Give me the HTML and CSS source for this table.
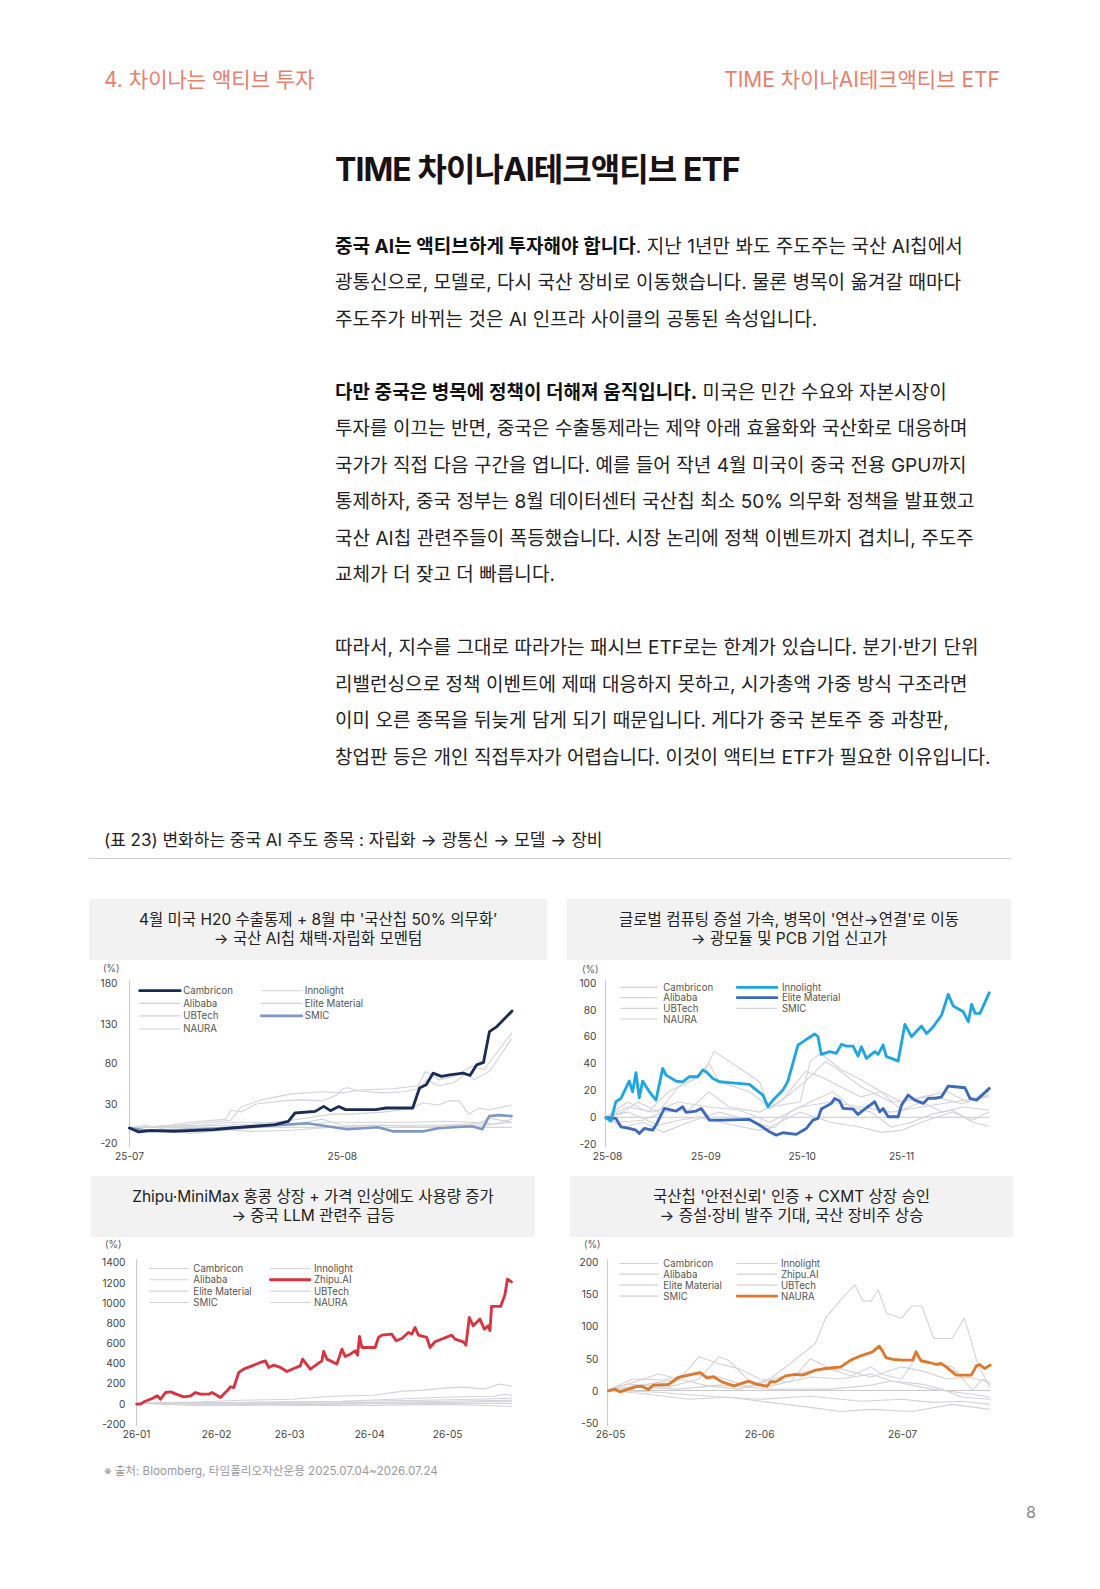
FILE: index.html
```html
<!DOCTYPE html>
<html lang="ko">
<head>
<meta charset="utf-8">
<title>TIME 차이나AI테크액티브 ETF</title>
<link rel="stylesheet" href="styles.css">
</head>
<body>
<div class="page">
  <header class="topbar">
    <span>4. 차이나는 액티브 투자</span>
    <span>TIME 차이나AI테크액티브 ETF</span>
  </header>

  <article class="article">
    <h1 class="title">TIME 차이나AI테크액티브 ETF</h1>
    <p class="para"><b>중국 AI는 액티브하게 투자해야 합니다</b>. 지난 1년만 봐도 주도주는 국산 AI칩에서<br>광통신으로, 모델로, 다시 국산 장비로 이동했습니다. 물론 병목이 옮겨갈 때마다<br>주도주가 바뀌는 것은 AI 인프라 사이클의 공통된 속성입니다.</p>
    <p class="para"><b>다만 중국은 병목에 정책이 더해져 움직입니다.</b> 미국은 민간 수요와 자본시장이<br>투자를 이끄는 반면, 중국은 수출통제라는 제약 아래 효율화와 국산화로 대응하며<br>국가가 직접 다음 구간을 엽니다. 예를 들어 작년 4월 미국이 중국 전용 GPU까지<br>통제하자, 중국 정부는 8월 데이터센터 국산칩 최소 50% 의무화 정책을 발표했고<br>국산 AI칩 관련주들이 폭등했습니다. 시장 논리에 정책 이벤트까지 겹치니, 주도주<br>교체가 더 잦고 더 빠릅니다.</p>
    <p class="para">따라서, 지수를 그대로 따라가는 패시브 ETF로는 한계가 있습니다. 분기·반기 단위<br>리밸런싱으로 정책 이벤트에 제때 대응하지 못하고, 시가총액 가중 방식 구조라면<br>이미 오른 종목을 뒤늦게 담게 되기 때문입니다. 게다가 중국 본토주 중 과창판,<br>창업판 등은 개인 직접투자가 어렵습니다. 이것이 액티브 ETF가 필요한 이유입니다.</p>
  </article>

  <section class="figure">
    <div class="caption">(표 23) 변화하는 중국 AI 주도 종목 : 자립화 → 광통신 → 모델 → 장비</div>

    <div class="grid">
      <!-- Chart 1 -->
      <div class="cell">
        <div class="chead">4월 미국 H20 수출통제 + 8월 中 '국산칩 50% 의무화’<br>→ 국산 AI칩 채택·자립화 모멘텀</div>
        <svg class="chart" width="458" height="216" viewBox="0 0 452 213">
          <text class="unit" x="22" y="8">(%)</text>
          <text class="yl" x="28" y="23">180</text>
          <text class="yl" x="28" y="63">130</text>
          <text class="yl" x="28" y="102">80</text>
          <text class="yl" x="28" y="142">30</text>
          <text class="yl" x="28" y="181">-20</text>
          <line class="axis" x1="40" y1="20" x2="40" y2="184"/>
          <line class="zero" x1="40" y1="165" x2="417" y2="165"/>
          <text class="xl" x="40" y="193">25-07</text>
          <text class="xl" x="250" y="193">25-08</text>

          <polyline class="s-gray" points="40,166 100,162 140,158 150,145 170,138 200,132 230,130 250,131 270,128 300,127 325,124 332,110 345,118 360,115 378,105 390,108 417,72"/>
          <polyline class="s-gray" points="40,166 80,163 100,160 135,157 140,148 150,150 165,142 190,139 210,138 230,139 245,133 250,127 255,126 265,129 290,131 310,130 326,127 333,118 345,124 360,121 372,112 380,118 395,110 417,78"/>
          <polyline class="s-gray" points="40,166 100,164 160,162 200,158 240,152 260,152 290,150 315,147 330,141 345,143 355,139 365,139 375,152 385,146 395,148 417,143"/>
          <polyline class="s-gray" points="40,166 70,164 110,163 140,160 180,160 200,163 240,160 280,160 320,160 350,159 380,160 400,162 417,157"/>
          <polyline class="s-gray" points="40,166 60,165 90,166 130,167 160,169 200,168 240,165 280,163 320,163 350,163 385,161 395,156 417,160"/>
          <polyline class="s-gray" points="40,166 55,163 75,167 100,171 120,169 160,166 210,161 230,157 250,163 290,163 330,165 360,163 390,163 417,160"/>
          <polyline class="s-smic" points="40,166 55,168 90,168 130,166 170,164 200,162 215,161 235,164 255,167 285,165 300,169 330,169 345,166 360,165 378,164 388,167 395,154 405,153 417,154"/>
          <polyline class="s-cam" points="40,165.7 49,169.6 60.6,168.3 83.8,169 100.4,168.3 123.7,167.3 140.3,165.7 163.5,164 183.4,162.4 196.7,159.1 203.3,150.9 223.3,149.3 231.6,144.4 238.2,148.6 246.5,144.4 253.1,147.6 283,147.6 293,146 319.5,146 326.2,126.3 332.8,123 339.5,111.6 347.8,114.8 356,113.2 369.3,111.6 376,113.9 382.6,103.4 389.3,101 395.2,70.6 402.5,65.6 417.5,50.2"/>

          <line class="s-cam" x1="50" y1="30.2" x2="90" y2="30.2"/>
          <text class="lg" x="93" y="30.2">Cambricon</text>
          <line class="s-gray" x1="50" y1="42.7" x2="90" y2="42.7"/>
          <text class="lg" x="93" y="42.7">Alibaba</text>
          <line class="s-gray" x1="50" y1="55.1" x2="90" y2="55.1"/>
          <text class="lg" x="93" y="55.1">UBTech</text>
          <line class="s-gray" x1="50" y1="68" x2="90" y2="68"/>
          <text class="lg" x="93" y="68">NAURA</text>
          <line class="s-gray" x1="170" y1="30.2" x2="210" y2="30.2"/>
          <text class="lg" x="213" y="30.2">Innolight</text>
          <line class="s-gray" x1="170" y1="42.7" x2="210" y2="42.7"/>
          <text class="lg" x="213" y="42.7">Elite Material</text>
          <line class="s-smic" x1="170" y1="55.1" x2="210" y2="55.1"/>
          <text class="lg" x="213" y="55.1">SMIC</text>
        </svg>
      </div>

      <!-- Chart 2 -->
      <div class="cell">
        <div class="chead">글로벌 컴퓨팅 증설 가속, 병목이 '연산→연결'로 이동<br>→ 광모듈 및 PCB 기업 신고가</div>
        <svg class="chart" width="444" height="216" viewBox="0 0 438 213">
          <text class="unit" x="23" y="9">(%)</text>
          <text class="yl" x="29" y="23">100</text>
          <text class="yl" x="29" y="49">80</text>
          <text class="yl" x="29" y="75">60</text>
          <text class="yl" x="29" y="102">40</text>
          <text class="yl" x="29" y="128">20</text>
          <text class="yl" x="29" y="155">0</text>
          <text class="yl" x="29" y="181">-20</text>
          <line class="axis" x1="38" y1="20" x2="38" y2="184"/>
          <line class="zero" x1="38" y1="155" x2="417" y2="155"/>
          <text class="xl" x="40" y="193">25-08</text>
          <text class="xl" x="137" y="193">25-09</text>
          <text class="xl" x="232" y="193">25-10</text>
          <text class="xl" x="330" y="193">25-11</text>

          <polyline class="s-gray" points="38,155 60,140 80,150 100,130 120,120 135,112 145,90 160,100 175,110 190,120 200,147 215,135 235,110 250,115 270,125 290,135 310,130 330,148 350,140 370,150 390,145 416,148"/>
          <polyline class="s-gray" points="38,155 55,150 70,140 90,150 110,125 125,118 140,102 150,120 180,130 200,145 230,140 240,100 250,92 270,108 290,118 310,130 330,140 350,135 375,130 395,140 416,133"/>
          <polyline class="s-gray" points="38,155 50,160 75,158 95,150 120,148 140,130 160,145 190,150 210,140 235,120 255,100 270,110 290,125 320,140 340,138 360,134 390,142 416,130"/>
          <polyline class="s-gray" points="38,155 60,150 90,163 110,158 130,155 160,162 190,168 205,165 220,150 240,140 262,130 280,145 300,150 320,165 340,160 360,152 380,148 400,160 416,164"/>
          <polyline class="s-gray" points="38,155 55,165 75,160 95,170 120,160 150,150 180,158 200,165 230,150 260,160 290,165 310,170 330,168 350,160 380,150 400,158 416,150"/>
          <polyline class="s-gray" points="38,155 60,145 85,150 110,140 140,145 170,148 200,160 230,145 260,140 290,145 320,150 350,145 380,140 416,135"/>
          <polyline class="s-elite" points="38.4,155.6 48.2,156.2 53.2,164.5 61.4,166.1 68,167.8 71.3,171.1 76.2,166.1 84.5,167.8 87.8,162.8 96,146.4 107.5,149 114.1,144.7 117.4,150.3 127.3,149 132.3,146.4 140.5,157.9 153.7,157.9 180,157.2 189.9,162.8 199.8,169.4 206.4,172.7 213,170.4 226.2,172 236.1,166.1 242.6,157.9 247.6,156.2 250.9,147 260.8,141.4 264.1,136.5 269,139.1 272.3,146.4 282.2,147 287.1,152.3 295.4,145.7 303.6,139.8 308.5,149.7 311.8,146.4 316.8,154.6 326.7,154.6 330,143.1 336.6,133.2 343.1,138.2 351.4,141.4 356.3,136.5 362.9,136.5 369.5,134.9 376.1,124.3 382.7,125 392.6,126 397.5,136.5 404.1,138.2 416.6,126.6"/>
          <polyline class="s-inno" points="38.4,155.6 43.3,158.9 48.2,139.8 53.2,136.5 61.4,119.4 64.7,129.9 68,111.2 71.3,135.8 74.6,119.4 81.2,129.9 87.8,138.2 94.4,106.9 97.7,113.5 107.5,119.4 114.1,120.1 120.7,115.1 129,115.1 133.9,108.5 137.2,110.2 143.8,116.8 150.4,120.1 160.3,121 180,122.7 193.2,133.2 198.2,144.7 203.1,138.2 213,128.3 217.9,119.4 227.8,83.9 237.7,77.3 244.3,73 247.6,75.6 250.9,93.1 259.1,90.4 265.7,92.1 270.7,83.2 275.6,84.9 282.2,84.9 287.1,94.7 290.4,85.5 295.4,97 303.6,90.4 306.9,93.1 311.8,83.9 315.1,95.4 320.1,97 326.7,99.7 333.3,63.5 339.8,75.6 349.7,65.1 354.7,72.4 361.3,65.8 369.5,54.3 376.1,33.9 381,45.4 390.9,51 395.9,60.8 399.2,43.7 402.5,52.6 407.4,52.6 416.6,32.2"/>

          <line class="s-gray" x1="53" y1="27" x2="89" y2="27"/>
          <text class="lg" x="95" y="27">Cambricon</text>
          <line class="s-gray" x1="53" y1="37.1" x2="89" y2="37.1"/>
          <text class="lg" x="95" y="37.1">Alibaba</text>
          <line class="s-gray" x1="53" y1="47.7" x2="89" y2="47.7"/>
          <text class="lg" x="95" y="47.7">UBTech</text>
          <line class="s-gray" x1="53" y1="58.2" x2="89" y2="58.2"/>
          <text class="lg" x="95" y="58.2">NAURA</text>
          <line class="s-inno" x1="168" y1="27" x2="207" y2="27"/>
          <text class="lg" x="212" y="27">Innolight</text>
          <line class="s-elite" x1="168" y1="37.1" x2="207" y2="37.1"/>
          <text class="lg" x="212" y="37.1">Elite Material</text>
          <line class="s-gray" x1="168" y1="47.7" x2="207" y2="47.7"/>
          <text class="lg" x="212" y="47.7">SMIC</text>
        </svg>
      </div>

      <!-- Chart 3 -->
      <div class="cell">
        <div class="chead chead-l">Zhipu·MiniMax 홍콩 상장 + 가격 인상에도 사용량 증가<br>→ 중국 LLM 관련주 급등</div>
        <svg class="chart" width="458" height="209" viewBox="0 0 452 206">
          <text class="unit" x="24" y="7.5">(%)</text>
          <text class="yl" x="36" y="25">1400</text>
          <text class="yl" x="36" y="44.9">1200</text>
          <text class="yl" x="36" y="64.8">1000</text>
          <text class="yl" x="36" y="84.6">800</text>
          <text class="yl" x="36" y="104.5">600</text>
          <text class="yl" x="36" y="124.4">400</text>
          <text class="yl" x="36" y="144.3">200</text>
          <text class="yl" x="36" y="164.2">0</text>
          <text class="yl" x="36" y="184">-200</text>
          <line class="axis" x1="47" y1="22" x2="47" y2="186"/>
          <line class="zero" x1="47" y1="164" x2="417" y2="164"/>
          <text class="xl" x="47" y="194.5">26-01</text>
          <text class="xl" x="126" y="194.5">26-02</text>
          <text class="xl" x="198" y="194.5">26-03</text>
          <text class="xl" x="277" y="194.5">26-04</text>
          <text class="xl" x="354" y="194.5">26-05</text>

          <polyline class="s-gray" points="47,164 100,163 150,161 200,160 240,157 280,156 310,152 330,151 350,149 370,148 390,150 405,145 417,147"/>
          <polyline class="s-gray" points="47,164 150,163 250,162 300,160 350,158 400,157 410,155 417,156"/>
          <polyline class="s-gray" points="47,164 120,165 200,163 260,162 330,161 380,160 417,159"/>
          <polyline class="s-gray" points="47,164 100,166 160,166 230,165 300,164 360,163 417,162"/>
          <polyline class="s-gray" points="47,164 130,164 200,166 280,166 350,165 417,167"/>
          <polyline class="s-gray" points="47,164 90,163 150,165 220,164 290,163 350,162 417,161"/>
          <polyline class="s-zhipu" points="47,164.8 50.9,164.8 54.2,162.5 62.4,159.2 67.4,156.6 70.6,159.9 75.6,153.3 80.5,152.7 88.7,155.9 93.6,157.6 100.2,156.6 105.1,153.3 110,155 118.2,155 121.5,153.3 129.7,158.2 136.3,151.7 139.6,147.7 142.9,148.4 147.8,133.6 152.7,130.3 160.9,127 169.1,123.7 174.1,122.1 177.3,128.6 182.3,126.3 188.8,128.6 195.4,132.6 202,129.6 208.5,127 210.8,120.4 218.4,130.3 226.6,124.4 229.9,122.1 231.5,112.8 234.8,120.4 244.6,125.3 249.6,110.5 252.8,117.8 257.8,115.5 262.7,112.2 265,116.5 267,98 269.3,108.9 282.4,108.9 285.7,99 289,96.7 298.8,95.7 303.1,102.3 308.7,100 315.2,94.1 318.5,95.7 321.8,89.2 325.1,96.7 333.3,99 336.6,108.9 341.5,103.3 357.9,96.7 361.2,100.7 369.4,103.3 372,106.6 375.3,79.3 379.2,87.5 385.8,80.9 390.1,90.8 394,87.5 395.7,92.4 397.3,68.4 406.2,68.4 410.4,57.2 413,41.5 417,44.1"/>

          <line class="s-gray" x1="60" y1="30.9" x2="98" y2="30.9"/>
          <text class="lg" x="103" y="30.9">Cambricon</text>
          <line class="s-gray" x1="60" y1="42.1" x2="98" y2="42.1"/>
          <text class="lg" x="103" y="42.1">Alibaba</text>
          <line class="s-gray" x1="60" y1="53.3" x2="98" y2="53.3"/>
          <text class="lg" x="103" y="53.3">Elite Material</text>
          <line class="s-gray" x1="60" y1="64.5" x2="98" y2="64.5"/>
          <text class="lg" x="103" y="64.5">SMIC</text>
          <line class="s-gray" x1="179" y1="30.9" x2="218" y2="30.9"/>
          <text class="lg" x="222" y="30.9">Innolight</text>
          <line class="s-zhipu" x1="179" y1="42.1" x2="218" y2="42.1"/>
          <text class="lg" x="222" y="42.1">Zhipu.AI</text>
          <line class="s-gray" x1="179" y1="53.3" x2="218" y2="53.3"/>
          <text class="lg" x="222" y="53.3">UBTech</text>
          <line class="s-gray" x1="179" y1="64.5" x2="218" y2="64.5"/>
          <text class="lg" x="222" y="64.5">NAURA</text>
        </svg>
      </div>

      <!-- Chart 4 -->
      <div class="cell">
        <div class="chead chead-r">국산칩 '안전신뢰' 인증 + CXMT 상장 승인<br>→ 증설·장비 발주 기대, 국산 장비주 상승</div>
        <svg class="chart" width="444" height="209" viewBox="0 0 438 206">
          <text class="unit" x="25" y="7.5">(%)</text>
          <text class="yl" x="31" y="25">200</text>
          <text class="yl" x="31" y="56.6">150</text>
          <text class="yl" x="31" y="88.2">100</text>
          <text class="yl" x="31" y="119.8">50</text>
          <text class="yl" x="31" y="151.4">0</text>
          <text class="yl" x="31" y="183">-50</text>
          <line class="axis" x1="40" y1="22" x2="40" y2="186"/>
          <line class="zero" x1="40" y1="151.4" x2="417" y2="151.4"/>
          <text class="xl" x="43" y="194.5">26-05</text>
          <text class="xl" x="190" y="194.5">26-06</text>
          <text class="xl" x="331" y="194.5">26-07</text>

          <polyline class="s-gray" points="40,151 80,145 110,140 140,147 170,150 200,140 220,125 245,105 255,80 270,62 284,47 292,63 300,63 307,52 315,75 330,80 340,68 350,68 362,100 380,100 392,80 398,100 405,125 417,148"/>
          <polyline class="s-gray" points="40,151 70,142 90,135 110,140 120,130 130,118 150,125 170,130 190,140 220,143 240,120 260,130 280,137 300,128 310,135 330,140 345,118 360,125 380,128 400,151 410,140 417,145"/>
          <polyline class="s-gray" points="40,151 60,145 100,148 130,140 150,118 160,122 180,142 200,147 240,138 270,140 300,135 320,142 350,145 370,150 390,158 417,160"/>
          <polyline class="s-gray" points="40,151 80,155 120,160 160,158 200,163 240,168 270,172 300,170 340,172 380,165 417,170"/>
          <polyline class="s-gray" points="40,151 90,153 140,157 190,160 240,157 290,162 330,160 360,163 390,162 417,165"/>
          <polyline class="s-gray" points="40,151 70,148 110,150 150,146 200,150 260,150 300,146 320,142 360,150 400,155 417,158"/>
          <polyline class="s-gray" points="40,151 65,140 95,141 120,135 150,138 180,148 210,138 240,132 270,130 300,138 330,128 350,132 375,140 395,138 417,143"/>
          <polyline class="s-naura" points="40.7,151.7 47.3,150 52.2,152.7 60.5,150 67.1,147.7 73.7,147.1 80.3,150.3 85.2,146.1 100.1,145.4 110,138.5 119.9,136.2 131.4,133.6 138,138.8 144.6,137.8 152.9,142.8 164.4,146.7 179.3,142.1 187.5,145.4 197.4,147.1 200.7,142.8 205.7,142.8 215.6,136.9 225.5,135.5 232.1,136.2 237,134.6 245.3,131.3 255.2,129.6 270,128 279.9,121.4 289.8,117.1 301.4,113.2 308,107.6 311.3,112.5 314.6,118.8 321.2,120.7 331.1,121.4 341,121.4 344.3,113.2 349.2,122.1 357.5,123.7 364.1,125.7 369,124.7 374,128 383.9,136.2 398.7,136.2 403.7,127.3 407,125.7 411.9,129.6 417.5,126.3"/>

          <line class="s-gray" x1="52" y1="26" x2="90" y2="26"/>
          <text class="lg" x="95" y="26">Cambricon</text>
          <line class="s-gray" x1="52" y1="36.5" x2="90" y2="36.5"/>
          <text class="lg" x="95" y="36.5">Alibaba</text>
          <line class="s-gray" x1="52" y1="47.4" x2="90" y2="47.4"/>
          <text class="lg" x="95" y="47.4">Elite Material</text>
          <line class="s-gray" x1="52" y1="58.2" x2="90" y2="58.2"/>
          <text class="lg" x="95" y="58.2">SMIC</text>
          <line class="s-gray" x1="168" y1="26" x2="207" y2="26"/>
          <text class="lg" x="211" y="26">Innolight</text>
          <line class="s-gray" x1="168" y1="36.5" x2="207" y2="36.5"/>
          <text class="lg" x="211" y="36.5">Zhipu.AI</text>
          <line class="s-gray" x1="168" y1="47.4" x2="207" y2="47.4"/>
          <text class="lg" x="211" y="47.4">UBTech</text>
          <line class="s-naura" x1="168" y1="58.2" x2="207" y2="58.2"/>
          <text class="lg" x="211" y="58.2">NAURA</text>
        </svg>
      </div>
    </div>

    <div class="source">※ 출처: Bloomberg, 타임폴리오자산운용 2025.07.04~2026.07.24</div>
  </section>

  <footer class="pagenum">8</footer>
</div>
</body>
</html>
```

FILE: styles.css
```css
html, body {
  margin: 0;
  padding: 0;
  background: #ffffff;
}

body {
  font-family: "Inter", "Noto Sans CJK KR", "Noto Sans", sans-serif;
  color: #1f1a1a;
}

.page {
  width: 1100px;
  height: 1589px;
  padding-top: 68px;
  box-sizing: border-box;
  overflow: hidden;
}

.topbar {
  display: flex;
  justify-content: space-between;
  padding: 0 100px 0 104px;
  font-size: 21px;
  line-height: 24px;
  color: #e8806c;
  letter-spacing: 0;
}

.article {
  margin-left: 335px;
  width: 720px;
}

.title {
  margin: 58px 0 0;
  font-size: 32px;
  line-height: 40px;
  font-weight: 700;
  letter-spacing: -0.95px;
  color: #1a1212;
}

.para {
  margin: 38.5px 0 0;
  font-size: 19px;
  line-height: 36.5px;
  letter-spacing: 0.05px;
  white-space: nowrap;
  color: #222;
}

.para + .para {
  margin-top: 36.5px;
}

.para b {
  font-weight: 700;
  color: #111;
}

.figure {
  margin: 51.5px 0 0 89px;
  width: 922px;
}

.caption {
  padding: 0 0 6px 15px;
  font-size: 17px;
  line-height: 24px;
  color: #222;
  border-bottom: 1px solid #cfcfcf;
}

.grid {
  margin-top: 40px;
  display: grid;
  grid-template-columns: 458px 444px;
  column-gap: 20px;
}

.cell {
  display: flex;
  flex-direction: column;
}

.chead {
  height: 61px;
  background: #f2f2f2;
  display: flex;
  align-items: center;
  justify-content: center;
  text-align: center;
  font-size: 15.5px;
  line-height: 19.5px;
  color: #222;
}

.chead-l {
  margin: 0 12px 0 2px;
}

.chead-r {
  margin: 0 -2px 0 3px;
}

.chart {
  display: block;
}

.chart text {
  font-family: "Inter", "Noto Sans", sans-serif;
  font-size: 10px;
  fill: #444;
  dominant-baseline: central;
}

.chart .unit {
  text-anchor: middle;
  font-size: 9.5px;
  fill: #555;
}

.chart .yl {
  text-anchor: end;
}

.chart .xl {
  text-anchor: middle;
}

.chart .lg {
  font-size: 9.5px;
  fill: #555;
}

.axis {
  stroke: #c9c9c9;
  stroke-width: 1;
}

.zero {
  stroke: #c9c9c9;
  stroke-width: 1;
}

polyline, .chart line {
  fill: none;
  stroke-linejoin: round;
  stroke-linecap: round;
}

.s-gray {
  stroke: #d3d3d9;
  stroke-width: 1.1;
}

.s-cam {
  stroke: #192c58;
  stroke-width: 2.8;
}

.s-smic {
  stroke: #7d98c4;
  stroke-width: 2.6;
}

.s-inno {
  stroke: #1ea6e2;
  stroke-width: 2.8;
}

.s-elite {
  stroke: #3b69bf;
  stroke-width: 2.8;
}

.s-zhipu {
  stroke: #d9333f;
  stroke-width: 2.8;
}

.s-naura {
  stroke: #e0782b;
  stroke-width: 2.8;
}

.source {
  margin: 17px 0 0 15px;
  font-size: 11.6px;
  line-height: 16px;
  color: #9a9a9a;
}

.pagenum {
  margin-top: 24px;
  padding-right: 64px;
  text-align: right;
  font-size: 16px;
  line-height: 18px;
  color: #8a8a8a;
}
```
